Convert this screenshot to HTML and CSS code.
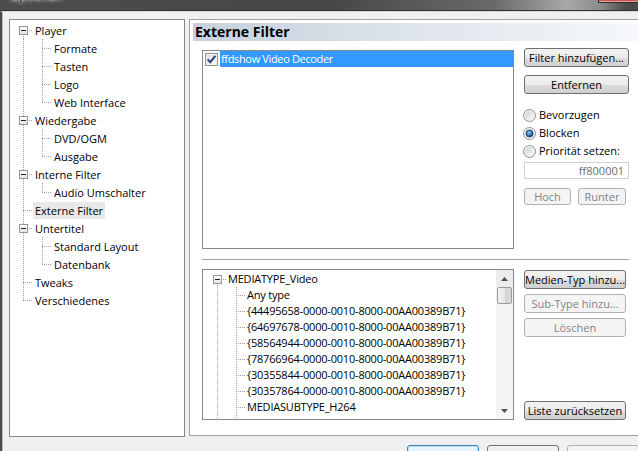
FILE: index.html
```html
<!DOCTYPE html>
<html lang="de">
<head>
<meta charset="utf-8">
<title>Optionen</title>
<link rel="stylesheet" href="styles.css">
</head>
<body>
<div class="window">
  <div class="titlebar"><span class="title">Optionen</span><span class="close"></span></div>
  <div class="frame">
    <div class="main">
      <div class="tree">
        <div class="row"><span class="c first"><span class="exp"></span></span><span class="t">Player</span></div>
        <div class="row"><span class="c pipe"></span><span class="c ch tee"></span><span class="t">Formate</span></div>
        <div class="row"><span class="c pipe"></span><span class="c ch tee"></span><span class="t">Tasten</span></div>
        <div class="row"><span class="c pipe"></span><span class="c ch tee"></span><span class="t">Logo</span></div>
        <div class="row"><span class="c pipe"></span><span class="c ch ell"></span><span class="t">Web Interface</span></div>
        <div class="row"><span class="c tee"><span class="exp"></span></span><span class="t">Wiedergabe</span></div>
        <div class="row"><span class="c pipe"></span><span class="c ch tee"></span><span class="t">DVD/OGM</span></div>
        <div class="row"><span class="c pipe"></span><span class="c ch ell"></span><span class="t">Ausgabe</span></div>
        <div class="row"><span class="c tee"><span class="exp"></span></span><span class="t">Interne Filter</span></div>
        <div class="row"><span class="c pipe"></span><span class="c ch ell"></span><span class="t">Audio Umschalter</span></div>
        <div class="row"><span class="c tee"></span><span class="t selected">Externe Filter</span></div>
        <div class="row"><span class="c tee"><span class="exp"></span></span><span class="t">Untertitel</span></div>
        <div class="row"><span class="c pipe"></span><span class="c ch tee"></span><span class="t">Standard Layout</span></div>
        <div class="row"><span class="c pipe"></span><span class="c ch ell"></span><span class="t">Datenbank</span></div>
        <div class="row"><span class="c tee"></span><span class="t">Tweaks</span></div>
        <div class="row"><span class="c ell"></span><span class="t">Verschiedenes</span></div>
      </div>

      <div class="page">
        <div class="page-head">Externe Filter</div>
        <div class="page-body">
          <div class="upper">
            <div class="list filters">
              <div class="frow">
                <svg class="cb" width="13" height="13" viewBox="0 0 13 13">
                  <defs><linearGradient id="cbg" x1="0" y1="0" x2="1" y2="1"><stop offset="0" stop-color="#dcdcdc"/><stop offset="1" stop-color="#fafafa"/></linearGradient></defs>
                  <rect x="0.5" y="0.5" width="12" height="12" fill="#f6f6f6" stroke="#8e8f8f"/>
                  <rect x="2" y="2" width="9" height="9" fill="url(#cbg)"/>
                  <path d="M2.6 6.4 L5.2 9.2 L10.4 2.8" fill="none" stroke="#2a3d85" stroke-width="1.9"/>
                </svg>
                <span class="sel">ffdshow Video Decoder</span>
              </div>
            </div>
            <div class="side">
              <button class="btn">Filter hinzufügen...</button>
              <button class="btn gap8">Entfernen</button>
              <div class="radios">
                <label class="radio">
                  <svg width="13" height="13" viewBox="0 0 13 13">
                    <defs><linearGradient id="ru1" x1="0" y1="0" x2="1" y2="1"><stop offset="0" stop-color="#cfcfcf"/><stop offset="1" stop-color="#fbfbfb"/></linearGradient></defs>
                    <circle cx="6.5" cy="6.5" r="6" fill="#f3f3f3" stroke="#8f8f8f"/>
                    <circle cx="6.5" cy="6.5" r="4.3" fill="url(#ru1)"/>
                  </svg>
                  <span>Bevorzugen</span>
                </label>
                <label class="radio">
                  <svg width="13" height="13" viewBox="0 0 13 13">
                    <defs><radialGradient id="rc" cx="0.45" cy="0.4" r="0.6"><stop offset="0" stop-color="#9bd3f5"/><stop offset="0.55" stop-color="#3479b8"/><stop offset="1" stop-color="#163f6e"/></radialGradient></defs>
                    <circle cx="6.5" cy="6.5" r="6" fill="#f3f3f3" stroke="#8f8f8f"/>
                    <circle cx="6.5" cy="6.5" r="3.6" fill="url(#rc)" stroke="#1c3f66" stroke-width="0.8"/>
                  </svg>
                  <span>Blocken</span>
                </label>
                <label class="radio">
                  <svg width="13" height="13" viewBox="0 0 13 13">
                    <defs><linearGradient id="ru3" x1="0" y1="0" x2="1" y2="1"><stop offset="0" stop-color="#cfcfcf"/><stop offset="1" stop-color="#fbfbfb"/></linearGradient></defs>
                    <circle cx="6.5" cy="6.5" r="6" fill="#f3f3f3" stroke="#8f8f8f"/>
                    <circle cx="6.5" cy="6.5" r="4.3" fill="url(#ru3)"/>
                  </svg>
                  <span>Priorität setzen:</span>
                </label>
              </div>
              <div class="field">ff800001</div>
              <div class="updown">
                <button class="btn small off hoch" disabled>Hoch</button>
                <button class="btn small off runter" disabled>Runter</button>
              </div>
            </div>
          </div>

          <div class="sep"></div>

          <div class="lower">
            <div class="list types">
              <div class="types-rows">
                <div class="row"><span class="c first"><span class="exp"></span></span><span class="t">MEDIATYPE_Video</span></div>
                <div class="row"><span class="c pipe"></span><span class="c ch tee"></span><span class="t">Any type</span></div>
                <div class="row"><span class="c pipe"></span><span class="c ch tee"></span><span class="t">{44495658-0000-0010-8000-00AA00389B71}</span></div>
                <div class="row"><span class="c pipe"></span><span class="c ch tee"></span><span class="t">{64697678-0000-0010-8000-00AA00389B71}</span></div>
                <div class="row"><span class="c pipe"></span><span class="c ch tee"></span><span class="t">{58564944-0000-0010-8000-00AA00389B71}</span></div>
                <div class="row"><span class="c pipe"></span><span class="c ch tee"></span><span class="t">{78766964-0000-0010-8000-00AA00389B71}</span></div>
                <div class="row"><span class="c pipe"></span><span class="c ch tee"></span><span class="t">{30355844-0000-0010-8000-00AA00389B71}</span></div>
                <div class="row"><span class="c pipe"></span><span class="c ch tee"></span><span class="t">{30357864-0000-0010-8000-00AA00389B71}</span></div>
                <div class="row"><span class="c pipe"></span><span class="c ch tee"></span><span class="t">MEDIASUBTYPE_H264</span></div>
                <div class="row"><span class="c pipe"></span><span class="c ch tee"></span></div>
              </div>
              <div class="vscroll">
                <div class="sb-btn up"><svg width="7" height="4" viewBox="0 0 7 4"><polygon points="0,4 3.5,0 7,4" fill="#505050"/></svg></div>
                <div class="thumb"></div>
                <div class="track"></div>
                <div class="sb-btn"><svg width="7" height="4" viewBox="0 0 7 4"><polygon points="0,0 7,0 3.5,4" fill="#505050"/></svg></div>
              </div>
            </div>
            <div class="side side-lower">
              <button class="btn">Medien-Typ hinzu...</button>
              <button class="btn off gap5" disabled>Sub-Type hinzu...</button>
              <button class="btn off gap5" disabled>Löschen</button>
              <button class="btn bottom">Liste zurücksetzen</button>
            </div>
          </div>
        </div>
      </div>
    </div>

    <div class="actions">
      <button class="btn big default">OK</button>
      <button class="btn big">Abbrechen</button>
      <button class="btn big off" disabled>Übernehmen</button>
    </div>
  </div>
</div>
</body>
</html>
```

FILE: styles.css
```css
html, body {
  margin: 0;
  padding: 0;
  width: 638px;
  height: 451px;
  overflow: hidden;
  background: #f0f0f0;
}

body {
  font: 11px/1.2 "Open Sans", "Noto Sans", sans-serif;
  color: #000;
}

.window {
  width: 660px;
  height: 451px;
  overflow: hidden;
}

/* ---------- title bar ---------- */
.titlebar {
  height: 10px;
  display: flex;
  justify-content: space-between;
  align-items: flex-start;
  overflow: hidden;
  background: linear-gradient(to right, #4c4c4c 0%, #474747 50%, #6a6a6a 75%, #a9a9a9 86%, #8a8a8a 91%, #4a4a4a 95%);
  border-bottom: 1px solid #333;
}

.title {
  margin: -11px 0 0 10px;
  font-size: 12px;
  line-height: 14px;
  color: #1a1a1a;
  text-shadow: 0 0 5px #fff, 0 0 3px #fff;
}

.close {
  width: 42px;
  height: 2px;
  margin-right: 18px;
  background: #c3574f;
  border: 1px solid #2c2c2c;
  border-top: 0;
  box-shadow: inset 0 -1px #e7a39c;
}

/* ---------- frame ---------- */
.frame {
  border-left: 2px solid #4b4b4b;
  border-top: 1px solid #d6d6d6;
  box-shadow: inset 1px 0 #bdbdbd;
  padding: 7px 0 0 7px;
  height: 440px;
}

.main {
  display: flex;
  gap: 4px;
  align-items: flex-start;
}

/* ---------- tree ---------- */
.tree {
  --y: 9px;
  width: 176px;
  height: 418px;
  box-sizing: border-box;
  border: 1px solid #828790;
  background: #fff;
  padding-top: 1px;
}

.row {
  display: flex;
  height: 18px;
  white-space: nowrap;
}

.t {
  height: 17px;
  line-height: 17px;
  margin-top: 1px;
  padding: 0 2px;
}

.t.selected {
  background: #e8e8e8;
}

.c {
  --x: 13px;
  --dv: repeating-linear-gradient(to bottom, #a0a0a0 0 1px, transparent 1px 2px);
  --dh: repeating-linear-gradient(to right, #a0a0a0 0 1px, transparent 1px 2px);
  flex: none;
  width: 23px;
  display: flex;
  align-items: flex-start;
  background-repeat: no-repeat;
}

.c.ch {
  --x: 9px;
  width: 19px;
}

.pipe {
  background-image: var(--dv);
  background-size: 1px 100%;
  background-position: var(--x) 0;
}

.tee {
  background-image: var(--dv), var(--dh);
  background-size: 1px 100%, calc(100% - var(--x)) 1px;
  background-position: var(--x) 0, var(--x) var(--y);
}

.ell {
  background-image: var(--dv), var(--dh);
  background-size: 1px calc(var(--y) + 1px), calc(100% - var(--x)) 1px;
  background-position: var(--x) 0, var(--x) var(--y);
}

.first {
  background-image: var(--dv), var(--dh);
  background-size: 1px calc(100% - var(--y)), calc(100% - var(--x)) 1px;
  background-position: var(--x) var(--y), var(--x) var(--y);
}

.exp {
  width: 9px;
  height: 9px;
  box-sizing: border-box;
  margin-left: calc(var(--x) - 4px);
  margin-top: calc(var(--y) - 4px);
  border: 1px solid #959595;
  background:
    linear-gradient(#1e1e1e, #1e1e1e) 1px 3px / 5px 1px no-repeat,
    linear-gradient(#ffffff, #e4e4e4);
}

/* ---------- property page ---------- */
.page {
  width: 453px;
  height: 417px;
  box-sizing: border-box;
  border: 1px solid #a0a0a0;
  background: #fff;
}

.page-head {
  margin: 3px 3px 0;
  height: 18px;
  line-height: 18px;
  padding-left: 2px;
  font-size: 14px;
  font-weight: 700;
  background: linear-gradient(to right, #c6d1dd, #f6f8fa);
}

.page-body {
  padding: 7px 0 0 12px;
}

.upper {
  display: flex;
  gap: 10px;
  align-items: flex-start;
}

.list {
  width: 312px;
  box-sizing: border-box;
  border: 1px solid #828790;
  background: #fff;
}

.filters {
  height: 199px;
  margin-top: 2px;
}

.frow {
  display: flex;
  align-items: center;
  height: 16px;
  padding-left: 2px;
  gap: 2px;
}

.cb {
  flex: none;
}

.sel {
  flex: 1;
  height: 16px;
  line-height: 16px;
  padding-left: 1px;
  background: #3399ff;
  color: #fff;
  white-space: nowrap;
  letter-spacing: -0.35px;
}

.side {
  width: 105px;
  display: flex;
  flex-direction: column;
}

.btn {
  display: block;
  height: 19px;
  padding: 0;
  box-sizing: border-box;
  border: 1px solid #707070;
  border-radius: 3px;
  background: linear-gradient(#f2f2f2 0%, #ebebeb 50%, #dddddd 51%, #cfcfcf 100%);
  font: 11px/17px "Open Sans", "Noto Sans", sans-serif;
  color: #000;
  text-align: center;
  white-space: nowrap;
  overflow: hidden;
}

.btn.off {
  border-color: #adb2b5;
  background: #f4f4f4;
  color: #838383;
}

.gap8 { margin-top: 8px; }
.gap5 { margin-top: 5px; }

.radios {
  margin-top: 12px;
  display: flex;
  flex-direction: column;
}

.radio {
  display: flex;
  align-items: center;
  gap: 3px;
  height: 18px;
  white-space: nowrap;
}

.radio svg {
  flex: none;
  margin-left: -1px;
}

.field {
  margin-top: 2px;
  height: 17px;
  box-sizing: border-box;
  border: 1px solid #cfcfcf;
  padding-right: 4px;
  text-align: right;
  line-height: 15px;
  color: #6d6d6d;
}

.updown {
  margin-top: 9px;
  display: flex;
  gap: 7px;
}

.btn.small {
  height: 17px;
  line-height: 15px;
}

.hoch { width: 47px; }
.runter { width: 48px; }

.sep {
  margin: 10px 12px 0 0;
  height: 1px;
  background: #a0a0a0;
}

.lower {
  margin-top: 9px;
  display: flex;
  gap: 10px;
  align-items: stretch;
}

.types {
  --y: 8px;
  height: 151px;
  display: flex;
}

.types-rows {
  flex: 1;
  padding: 1px 0 0 1px;
  overflow: hidden;
  letter-spacing: -0.2px;
}

.types .row {
  height: 16px;
}

.types .t {
  height: 16px;
  line-height: 16px;
  margin-top: 0;
  padding-left: 1px;
}

.vscroll {
  width: 17px;
  flex: none;
  display: flex;
  flex-direction: column;
  background: #f5f5f5;
}

.sb-btn {
  height: 17px;
  display: flex;
  align-items: center;
  justify-content: center;
}

.sb-btn.up {
  background: #ececec;
}

.thumb {
  height: 17px;
  margin: 0 1px;
  box-sizing: border-box;
  border: 1px solid #999;
  border-radius: 2px;
  background: linear-gradient(to right, #f4f4f4, #e6e6e6 50%, #d3d3d3 51%, #d9d9d9);
}

.track {
  flex: 1;
}

.side-lower {
  width: 102px;
  padding-top: 1px;
}

.btn.bottom {
  margin-top: auto;
}

/* ---------- dialog buttons ---------- */
.actions {
  display: flex;
  gap: 8px;
  margin-top: 8px;
  padding-left: 398px;
}

.btn.big {
  width: 72px;
  height: 23px;
  line-height: 16px;
}

.btn.default {
  border-color: #3c7fb1;
  background: linear-gradient(#eaf6fd 0%, #d9f0fc 50%, #bee6fd 51%, #a7d9f5 100%);
  box-shadow: inset 0 0 0 1px #b9e3f8;
}
```
